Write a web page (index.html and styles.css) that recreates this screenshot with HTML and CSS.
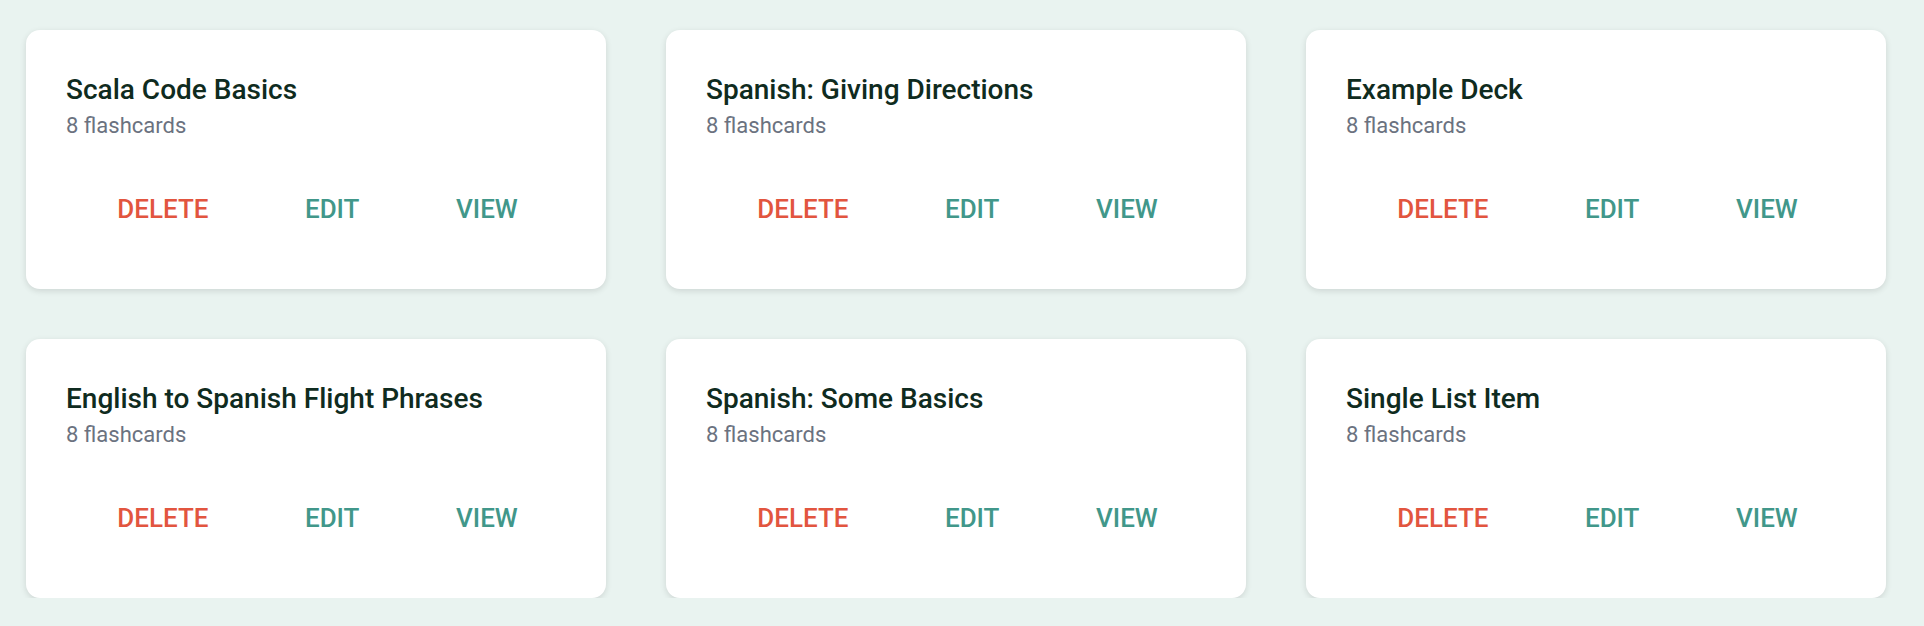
FILE: index.html
```html
<!DOCTYPE html>
<html lang="en">
<head>
    <meta charset="UTF-8">
    <meta name="viewport" content="width=device-width, initial-scale=1.0">
    <title>Decks</title>
    <link rel="stylesheet" href="styles.css">
</head>
<body>
    <div class="deck-list">
        <div class="deck-card">
            <h2 class="deck-title">Scala Code Basics</h2>
            <p class="deck-count">8 flashcards</p>
            <div class="deck-actions">
                <button class="btn btn-delete">Delete</button>
                <button class="btn">Edit</button>
                <button class="btn">View</button>
            </div>
        </div>
        <div class="deck-card">
            <h2 class="deck-title">Spanish: Giving Directions</h2>
            <p class="deck-count">8 flashcards</p>
            <div class="deck-actions">
                <button class="btn btn-delete">Delete</button>
                <button class="btn">Edit</button>
                <button class="btn">View</button>
            </div>
        </div>
        <div class="deck-card">
            <h2 class="deck-title">Example Deck</h2>
            <p class="deck-count">8 flashcards</p>
            <div class="deck-actions">
                <button class="btn btn-delete">Delete</button>
                <button class="btn">Edit</button>
                <button class="btn">View</button>
            </div>
        </div>
        <div class="deck-card">
            <h2 class="deck-title">English to Spanish Flight Phrases</h2>
            <p class="deck-count">8 flashcards</p>
            <div class="deck-actions">
                <button class="btn btn-delete">Delete</button>
                <button class="btn">Edit</button>
                <button class="btn">View</button>
            </div>
        </div>
        <div class="deck-card">
            <h2 class="deck-title">Spanish: Some Basics</h2>
            <p class="deck-count">8 flashcards</p>
            <div class="deck-actions">
                <button class="btn btn-delete">Delete</button>
                <button class="btn">Edit</button>
                <button class="btn">View</button>
            </div>
        </div>
        <div class="deck-card">
            <h2 class="deck-title">Single List Item</h2>
            <p class="deck-count">8 flashcards</p>
            <div class="deck-actions">
                <button class="btn btn-delete">Delete</button>
                <button class="btn">Edit</button>
                <button class="btn">View</button>
            </div>
        </div>
    </div>
</body>
</html>
```

FILE: styles.css
```css
body {
    margin: 0;
    padding: 0;
    font-family: Roboto, "Liberation Sans", sans-serif;
    background-color: #e9f3f0;
    color: #0f2b20;
}

.deck-list {
    display: grid;
    grid-template-columns: repeat(3, 580px);
    column-gap: 60px;
    row-gap: 50px;
    padding: 30px 38px 0 26px;
}

.deck-card {
    background: #fff;
    border-radius: 14px;
    box-shadow: 0 2px 6px rgba(0, 0, 0, 0.12);
    height: 259px;
    box-sizing: border-box;
    padding: 43px 40px 0 40px;
}

.deck-title {
    margin: 0;
    font-size: 28px;
    line-height: 33px;
    font-weight: 500;
    color: #0f2b20;
}

.deck-count {
    margin: 7px 0 0 0;
    font-size: 22px;
    line-height: 26px;
    color: #6b7280;
}

.deck-actions {
    display: flex;
    justify-content: space-around;
    margin-top: 55px;
    padding-left: 3px;
}

.btn {
    background: none;
    border: none;
    padding: 0;
    font-family: inherit;
    font-size: 26px;
    line-height: 30px;
    font-weight: 500;
    text-transform: uppercase;
    color: #41978a;
    cursor: pointer;
}

.btn-delete {
    color: #e2553f;
}
```
